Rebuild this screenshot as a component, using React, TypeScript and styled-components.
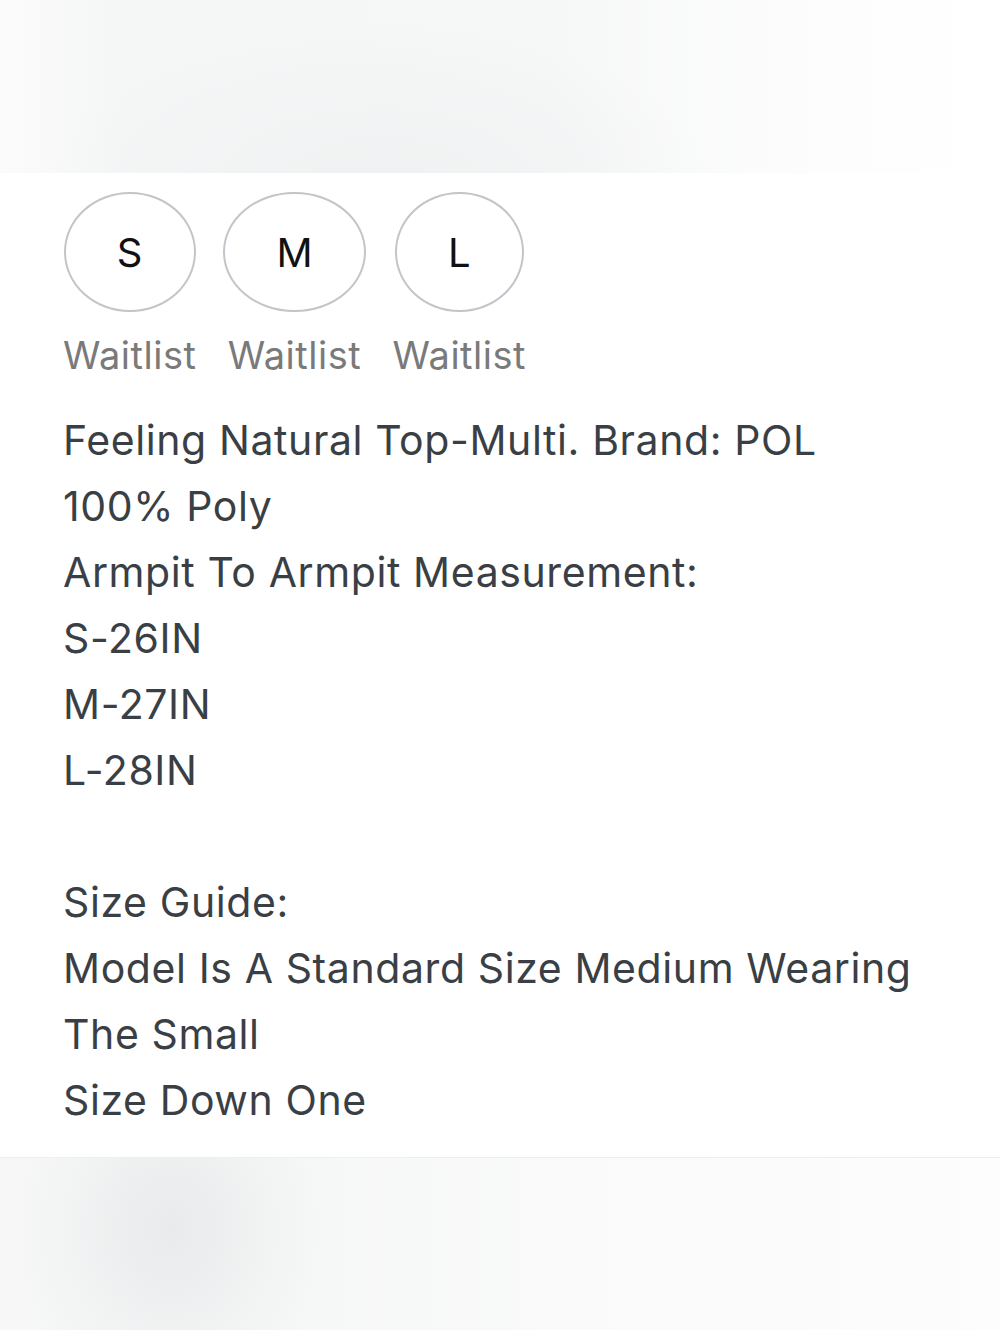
import React from "react";
import styled, { createGlobalStyle } from "styled-components";

const Global = createGlobalStyle`
  html, body { margin: 0; padding: 0; background: #ffffff; }
  body { font-family: "Inter", "Liberation Sans", sans-serif; }
`;

const Page = styled.div`
  width: 1000px;
  height: 1330px;
  display: flex;
  flex-direction: column;
  overflow: hidden;
`;

const TopImage = styled.div`
  height: 173px;
  flex: none;
  background:
    radial-gradient(ellipse 480px 240px at 380px 190px, rgba(238, 240, 241, 0.9), rgba(255, 255, 255, 0) 70%),
    linear-gradient(90deg, #fbfbfb 0%, #f5f6f6 12%, #f6f7f7 55%, #fdfdfd 82%, #ffffff 100%);
`;

const BottomImage = styled.div`
  flex: 1;
  border-top: 1px solid #eeeeee;
  background:
    radial-gradient(ellipse 220px 260px at 170px 70px, rgba(233, 234, 235, 1), rgba(255, 255, 255, 0) 70%),
    linear-gradient(90deg, #f7f7f7 0%, #f6f7f7 30%, #fafafa 60%, #fdfdfd 100%);
`;

const Panel = styled.div`
  flex: none;
  height: 984px;
  padding: 19px 0 0 63px;
  box-sizing: border-box;
  background: #ffffff;
`;

const SizeRow = styled.div`
  display: flex;
  gap: 27px;
`;

const SizeItem = styled.div`
  display: flex;
  flex-direction: column;
  align-items: center;
`;

const SizeButton = styled.button`
  height: 120px;
  padding: 0 51px;
  border: 2px solid #c2c5c9;
  border-radius: 50%;
  background: #ffffff;
  font-family: "Inter", "Liberation Sans", sans-serif;
  font-size: 40px;
  font-weight: 400;
  color: #111111;
  display: flex;
  align-items: center;
  justify-content: center;
`;

const Waitlist = styled.div`
  margin-top: 18px;
  font-family: "Inter", "Liberation Sans", sans-serif;
  font-size: 38px;
  line-height: 50px;
  color: #7a7a7a;
  letter-spacing: 0.5px;
`;

const Description = styled.div`
  margin-top: 27px;
  font-family: "Inter", "Liberation Sans", sans-serif;
  font-size: 41px;
  line-height: 66px;
  color: #3a3f45;
  letter-spacing: 0.6px;
`;

const Line = styled.div`
  min-height: 66px;
  white-space: nowrap;
`;

const sizes = ["S", "M", "L"];
const lines = [
  "Feeling Natural Top-Multi. Brand: POL",
  "100% Poly",
  "Armpit To Armpit Measurement:",
  "S-26IN",
  "M-27IN",
  "L-28IN",
  "",
  "Size Guide:",
  "Model Is A Standard Size Medium Wearing",
  "The Small",
  "Size Down One",
];

export default function App() {
  return (
    <Page>
      <Global />
      <TopImage />
      <Panel>
        <SizeRow>
          {sizes.map((s) => (
            <SizeItem key={s}>
              <SizeButton>{s}</SizeButton>
              <Waitlist>Waitlist</Waitlist>
            </SizeItem>
          ))}
        </SizeRow>
        <Description>
          {lines.map((l, i) => (
            <Line key={i}>{l}</Line>
          ))}
        </Description>
      </Panel>
      <BottomImage />
    </Page>
  );
}
